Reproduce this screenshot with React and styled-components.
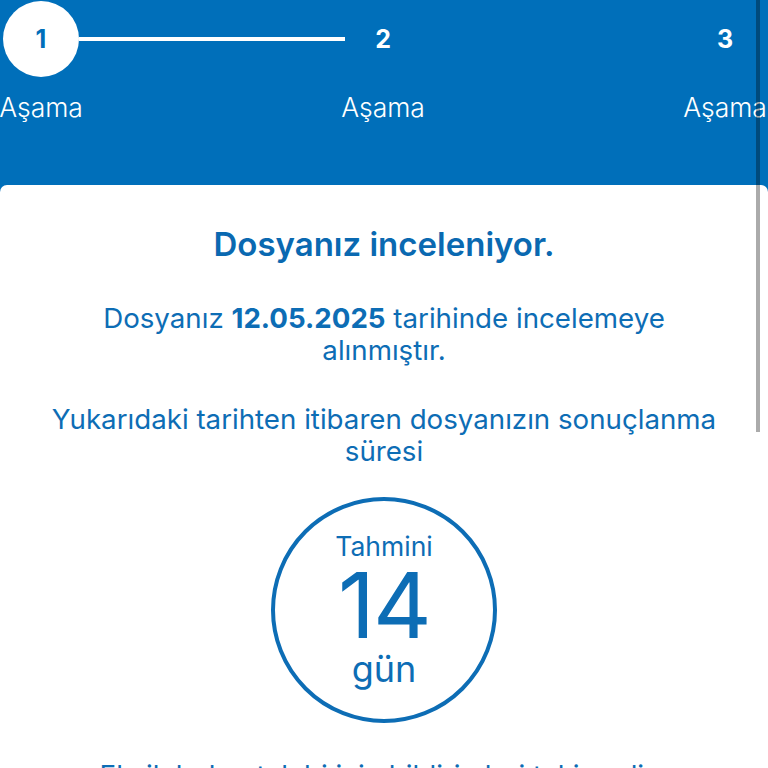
import React from "react"
import styled, { createGlobalStyle } from "styled-components"

const blue = "#006fba"
const textBlue = "#0d6db5"

const GlobalStyle = createGlobalStyle`
  html, body {
    margin: 0;
    padding: 0;
    background: ${blue};
    font-family: Inter, "Noto Sans", sans-serif;
  }
`

const Page = styled.div`
  min-height: 768px;
  display: flex;
  flex-direction: column;
`

const Header = styled.div`
  height: 185px;
  box-sizing: border-box;
  padding: 1px 2px 0 0;
`

const Steps = styled.div`
  display: flex;
  justify-content: space-between;
`

const Step = styled.div`
  width: 82px;
  display: flex;
  flex-direction: column;
  align-items: center;
`

const Marker = styled.div`
  position: relative;
  width: 76px;
  height: 76px;
  border-radius: 50%;
  display: flex;
  align-items: center;
  justify-content: center;
  background: ${props => (props.active ? "white" : "transparent")};
  color: ${props => (props.active ? blue : "white")};
  font-size: 25px;
  font-weight: 700;

  ${props => props.active && `
    &::after {
      content: "";
      position: absolute;
      left: 100%;
      top: 36px;
      width: 266px;
      height: 4px;
      background: white;
    }
  `}
`

const StepLabel = styled.div`
  margin-top: 15px;
  font-size: 26.5px;
  line-height: 30px;
  font-weight: 300;
  color: white;
  white-space: nowrap;
`

const Card = styled.div`
  flex: 1;
  background: white;
  border-radius: 7px 7px 0 0;
  padding: 39px 40px 0;
  display: flex;
  flex-direction: column;
  align-items: center;
  text-align: center;
  color: ${textBlue};
`

const Title = styled.h1`
  margin: 0;
  font-size: 33px;
  line-height: 40px;
  font-weight: 600;
  color: #0a69b1;
`

const Text = styled.p`
  margin: ${props => props.top || 0}px 0 0;
  max-width: 682px;
  font-size: 27.7px;
  line-height: 32px;
  font-weight: 400;

  b {
    font-weight: 700;
  }
`

const Estimate = styled.div`
  margin-top: 30px;
  width: 226px;
  height: 226px;
  flex-shrink: 0;
  box-sizing: border-box;
  border: 4px solid ${textBlue};
  border-radius: 50%;
  display: flex;
  flex-direction: column;
  align-items: center;
  justify-content: center;
`

const EstimateSmall = styled.div`
  font-size: 26.5px;
  line-height: 30px;
  font-weight: 400;
`

const EstimateBig = styled.div`
  font-size: 91px;
  line-height: 88px;
  font-weight: 400;
  letter-spacing: -2px;
`

const EstimateUnit = styled.div`
  font-size: 36px;
  line-height: 40px;
  font-weight: 400;
`

const Scrollbar = styled.div`
  position: fixed;
  top: 0;
  right: 8px;
  width: 4px;
  height: 432px;
  background: rgba(0, 0, 0, 0.33);
`

const steps = [
  { n: 1, active: true },
  { n: 2 },
  { n: 3 },
]

export default function App() {
  return (
    <Page>
      <GlobalStyle />
      <Header>
        <Steps>
          {steps.map(s => (
            <Step key={s.n}>
              <Marker active={s.active}>{s.n}</Marker>
              <StepLabel>Aşama</StepLabel>
            </Step>
          ))}
        </Steps>
      </Header>
      <Card>
        <Title>Dosyanız inceleniyor.</Title>
        <Text top={38}>
          Dosyanız <b>12.05.2025</b> tarihinde incelemeye alınmıştır.
        </Text>
        <Text top={37}>
          Yukarıdaki tarihten itibaren dosyanızın sonuçlanma süresi
        </Text>
        <Estimate>
          <EstimateSmall>Tahmini</EstimateSmall>
          <EstimateBig>14</EstimateBig>
          <EstimateUnit>gün</EstimateUnit>
        </Estimate>
        <Text top={36}>
          Eksik belge talebi için bildirimleri takip edin.
        </Text>
      </Card>
      <Scrollbar />
    </Page>
  )
}
